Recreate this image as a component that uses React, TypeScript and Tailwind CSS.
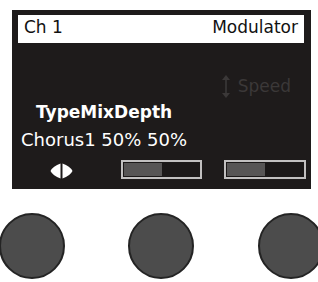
export default function App() {
  return (
    <div
      className="w-[318px] h-[282px] bg-white overflow-hidden flex flex-col"
      style={{ fontFamily: '"DejaVu Sans", Verdana, sans-serif' }}
    >
      {/* LCD screen */}
      <div className="mt-[10px] ml-[12px] w-[299px] h-[179px] bg-[#1e1b1b] flex flex-col shrink-0">
        {/* Header bar */}
        <div className="mt-[5px] ml-[6px] w-[286px] h-[28px] bg-white flex justify-between items-start pt-[4px] pl-[6px] pr-[6px] text-[17px] leading-[17px] text-[#111]">
          <span>Ch 1</span>
          <span>Modulator</span>
        </div>

        {/* Speed hint */}
        <div className="mt-[32px] h-[23px] flex justify-end items-start pr-[20px] gap-[8px] text-[#3b3838]">
          <svg width="8" height="23" viewBox="0 0 8 23" className="shrink-0">
            <polygon points="4,0 8,5 0,5" fill="#3b3838" />
            <rect x="3.2" y="4" width="1.6" height="15" fill="#3b3838" />
            <polygon points="4,23 8,18 0,18" fill="#3b3838" />
          </svg>
          <span className="text-[17px] leading-[17px] mt-[3px]">Speed</span>
        </div>

        {/* Parameter names */}
        <div className="mt-[6px] ml-[24px] text-[17px] leading-[17px] font-bold text-white">
          TypeMixDepth
        </div>
        <div className="mt-[10px] ml-[9px] text-[18px] leading-[18px] text-white whitespace-nowrap">
          Chorus1 50% 50%
        </div>

        {/* Controls row */}
        <div className="mt-[11px] h-[19px] flex items-start">
          <svg width="23" height="16" viewBox="0 0 23 16" className="ml-[38px] mt-[3px] shrink-0">
            <path d="M0.5,8 Q3,3 10.5,0.5 L10.5,15.5 Q3,13 0.5,8 Z" fill="#fff" />
            <path d="M22.5,8 Q20,3 12.5,0.5 L12.5,15.5 Q20,13 22.5,8 Z" fill="#fff" />
          </svg>
          <Bar className="ml-[48px] w-[81px]" value={50} />
          <Bar className="ml-[22px] w-[82px]" value={50} />
        </div>
      </div>

      {/* Knobs */}
      <div className="mt-[24px] flex shrink-0">
        <Knob className="ml-[-1px]" />
        <Knob className="ml-[63px]" />
        <Knob className="ml-[64px]" />
      </div>
    </div>
  );
}

function Bar({ className, value }: { className: string; value: number }) {
  return (
    <div className={`${className} h-[19px] border-2 border-[#c2c0c0] bg-[#1b1818] p-[1px] flex shrink-0`}>
      <div className="h-full bg-[#575555]" style={{ width: `${value}%` }} />
    </div>
  );
}

function Knob({ className }: { className: string }) {
  return (
    <div className={`${className} w-[66px] h-[66px] rounded-full bg-[#4c4c4c] border-2 border-[#242424] shrink-0`} />
  );
}
